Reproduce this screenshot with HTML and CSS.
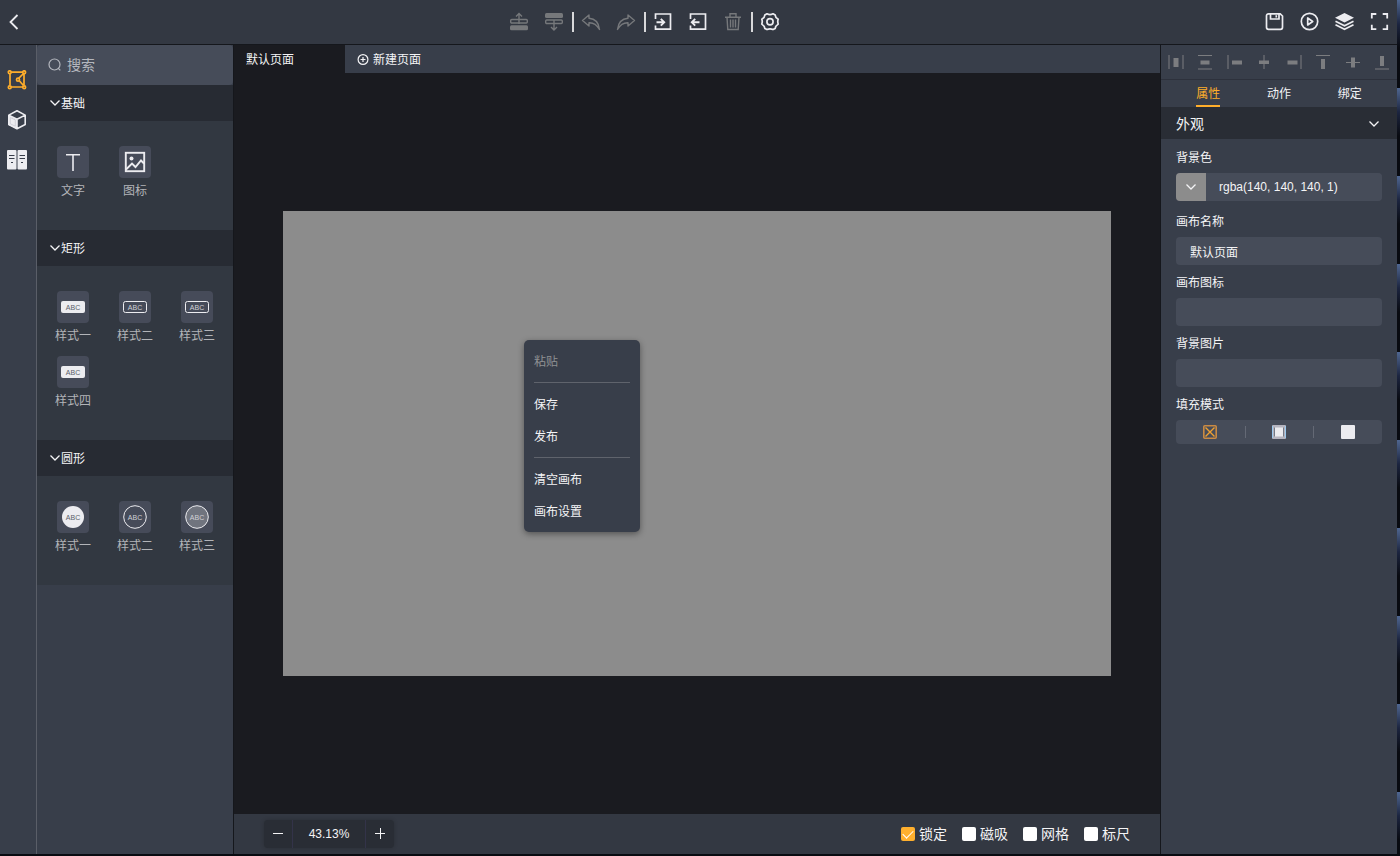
FILE: index.html
```html
<!DOCTYPE html>
<html lang="zh-CN">
<head>
<meta charset="utf-8">
<title>默认页面</title>
<link rel="stylesheet" href="styles.css">
</head>
<body>
<svg class="defs" aria-hidden="true">
  <symbol id="chev" viewBox="0 0 12 12"><path d="M1.500 3.500 6 8l4.500-4.500" fill="none" stroke="currentColor" stroke-width="1.300"/></symbol>
  <symbol id="abc-fill" viewBox="0 0 32 32"><rect x="4" y="10" width="24" height="12" rx="2" fill="#ececf0"/></symbol>
  <symbol id="abc-line" viewBox="0 0 32 32"><rect x="4.500" y="10.500" width="23" height="11" rx="2" fill="none" stroke="#ececf0"/></symbol>
</svg>
<div class="app">
  <header class="topbar">
    <button class="icon-btn" aria-label="返回"><svg viewBox="0 0 20 20"><path d="M13.500 3 6.500 10l7 7" fill="none" stroke="currentColor" stroke-width="1.800"/></svg></button>
    <div class="tools">
      <div class="tool-group">
        <button class="icon-btn off" aria-label="上移" disabled><svg viewBox="0 0 20 20"><g fill="none" stroke="currentColor" stroke-width="1.400"><path d="M10 12V2M7 4.500l3-3 3 3"/><rect x="1.700" y="7.500" width="16.600" height="3.500" rx="1"/></g><rect x="1" y="13.200" width="18" height="5" rx="1.500" fill="currentColor"/></svg></button>
        <button class="icon-btn off" aria-label="下移" disabled><svg viewBox="0 0 20 20"><g fill="none" stroke="currentColor" stroke-width="1.400"><path d="M10 8v9.500M7 15l3 3 3-3"/><rect x="1.700" y="8" width="16.600" height="3.500" rx="1"/></g><rect x="1" y="1" width="18" height="5" rx="1.500" fill="currentColor"/></svg></button>
      </div>
      <span class="bar"></span>
      <div class="tool-group">
        <button class="icon-btn off" aria-label="撤销" disabled><svg viewBox="0 0 20 20"><path d="M8 3 1.500 8.500 8 14v-3.300c4.500-.2 7.800 2 10.500 6.800C17.800 10.700 14 6.800 8 6.300Z" fill="none" stroke="currentColor" stroke-width="1.400" stroke-linejoin="round"/></svg></button>
        <button class="icon-btn off" aria-label="重做" disabled><svg viewBox="0 0 20 20"><path d="m12 3 6.500 5.500L12 14v-3.300c-4.500-.2-7.800 2-10.500 6.800C2.200 10.700 6 6.800 12 6.300Z" fill="none" stroke="currentColor" stroke-width="1.400" stroke-linejoin="round"/></svg></button>
      </div>
      <span class="bar"></span>
      <div class="tool-group">
        <button class="icon-btn" aria-label="导入"><svg viewBox="0 0 20 20"><g fill="none" stroke="currentColor" stroke-width="1.700"><path d="M2.500 7V2h15v15.200h-15v-3.700"/><path d="M3.500 10.300h7.500M7.800 6.900l3.400 3.400-3.400 3.400" stroke-width="1.900"/></g></svg></button>
        <button class="icon-btn" aria-label="导出"><svg viewBox="0 0 20 20"><g fill="none" stroke="currentColor" stroke-width="1.700"><path d="M2.500 7V2h15v15.200h-15v-3.700"/><path d="M11.500 10.300H4M7.200 6.900l-3.400 3.400 3.400 3.400" stroke-width="1.900"/></g></svg></button>
        <button class="icon-btn off" aria-label="删除" disabled><svg viewBox="0 0 20 20"><g fill="none" stroke="currentColor" stroke-width="1.400"><path d="M2 5.200h16M7 5V1.800h6V5M4 5.200l.8 12.300h10.400L16 5.200"/><path d="M7.500 7.500v8M10 7.500v8M12.500 7.500v8" stroke-width="1.400"/></g></svg></button>
      </div>
      <span class="bar"></span>
      <button class="icon-btn" aria-label="设置"><svg viewBox="0 0 20 20"><g fill="none" stroke="currentColor" stroke-width="1.700" stroke-linejoin="round"><path d="M7 1.800Q10 3.400 13 1.800L15.200 3.100Q15.300 5.600 18.200 7.300Q17.300 9.500 18.200 12.100Q15.300 13.900 15.200 16.400L13 17.600Q10 16 7 17.600L4.800 16.400Q4.700 13.900 1.800 12.100Q2.700 9.500 1.800 7.300Q4.700 5.600 4.800 3.100Z"/><circle cx="10" cy="9.700" r="3.100"/></g></svg></button>
    </div>
    <div class="tool-group">
      <button class="icon-btn" aria-label="保存"><svg viewBox="0 0 20 20"><g fill="none" stroke="currentColor" stroke-width="1.700"><path d="M3.500 1.800h11.700L17.500 4v11.300a2 2 0 0 1-2 2h-12a2 2 0 0 1-2-2V3.800a2 2 0 0 1 2-2Z"/><path d="M5.500 2v5h8.500V2M11.300 3.300v2.200"/></g></svg></button>
      <button class="icon-btn" aria-label="预览"><svg viewBox="0 0 20 20"><g fill="none" stroke="currentColor" stroke-width="1.700" stroke-linejoin="round"><circle cx="9.500" cy="9.500" r="8.200"/><path d="M7.700 6v7l5-3.500Z"/></g></svg></button>
      <button class="icon-btn" aria-label="图层"><svg viewBox="0 0 20 20"><path d="m9.500 1 9.500 4.800-9.500 4.800L0 5.800Z" fill="currentColor"/><path d="m.5 9.200 9 4.500 9-4.500M.5 12.700l9 4.500 9-4.500" fill="none" stroke="currentColor" stroke-width="1.700"/></svg></button>
      <button class="icon-btn" aria-label="全屏"><svg viewBox="0 0 20 20"><path d="M1.800 6.500V2h4.500M12.700 2h4.500v4.500M17.200 12.700v4.500h-4.500M6.300 17.200H1.800v-4.500" fill="none" stroke="currentColor" stroke-width="1.800"/></svg></button>
    </div>
  </header>

  <nav class="rail">
    <button class="icon-btn active" aria-label="组件"><svg viewBox="0 0 20 20"><g fill="none" stroke="currentColor" stroke-width="1.700"><path d="M4 2.200h12M4 17h12M3 4v11.500M17 4v11.500M16.500 3.500l-5 5M16.500 15.500l-4-4.500"/><circle cx="2.700" cy="2.200" r="1.400"/><circle cx="17.200" cy="2.200" r="1.400"/><circle cx="2.700" cy="17.200" r="1.400"/><circle cx="17.200" cy="17.200" r="1.400"/><circle cx="11" cy="9.700" r="1.500"/></g></svg></button>
    <button class="icon-btn" aria-label="模型"><svg viewBox="0 0 20 20"><path d="m1.500 5.500 8.500 4V19l-8.500-4Z" fill="currentColor"/><path d="m10 .8 8.200 4.300v9.400L10 18.800l-8.200-4.300V5.100ZM1.800 5.100 10 9.300l8.200-4.200M10 9.300v9.500" fill="none" stroke="currentColor" stroke-width="1.600" stroke-linejoin="round"/><path d="m3.300 7.500 5 2.400v6.300l-5-2.400Z" fill="none" stroke="#c9c9d2" stroke-width=".8"/></svg></button>
    <button class="icon-btn" aria-label="图库"><svg viewBox="0 0 20 20"><rect x="0" y="0" width="9.500" height="19.500" rx="1" fill="currentColor"/><rect x="10.500" y="0" width="9.500" height="19.500" rx="1" fill="currentColor"/><path d="M2 5.500h5.500M2 8.500h5.500M12.500 5.500H18M12.500 8.500H18M4 12.500h2M14 12.500h2" stroke="#373d49" stroke-width="1.200"/></svg></button>
  </nav>

  <aside class="library">
    <label class="search"><svg viewBox="0 0 14 14"><circle cx="6.500" cy="6.500" r="5.500" fill="none" stroke="currentColor" stroke-width="1.200"/><path d="m10.300 10.300 2 2" stroke="currentColor" stroke-width="1.200"/></svg><input type="text" placeholder="搜索" aria-label="搜索"></label>
    <section>
      <button class="group-head"><svg><use href="#chev"/></svg>基础</button>
      <div class="grid">
        <button class="item"><span class="tile"><svg viewBox="0 0 32 32"><path d="M9 8.700h14M16 8.700V25" stroke="#ececf0" stroke-width="1.600"/></svg></span>文字</button>
        <button class="item"><span class="tile"><svg viewBox="0 0 32 32"><g fill="none" stroke="#ececf0" stroke-width="1.900"><rect x="6.800" y="6.800" width="18.400" height="18.400"/><path d="M7 23.500l6-6 3.500 3.500 5.500-6.500 3 3"/></g><circle cx="12.500" cy="12.500" r="2" fill="#ececf0"/></svg></span>图标</button>
      </div>
    </section>
    <section>
      <button class="group-head"><svg><use href="#chev"/></svg>矩形</button>
      <div class="grid">
        <button class="item"><span class="tile dark"><svg viewBox="0 0 32 32"><use href="#abc-fill"/><text x="16" y="18.500">ABC</text></svg></span>样式一</button>
        <button class="item"><span class="tile"><svg viewBox="0 0 32 32"><use href="#abc-line"/><text x="16" y="18.500">ABC</text></svg></span>样式二</button>
        <button class="item"><span class="tile"><svg viewBox="0 0 32 32"><use href="#abc-line"/><text x="16" y="18.500">ABC</text></svg></span>样式三</button>
        <button class="item"><span class="tile dark"><svg viewBox="0 0 32 32"><use href="#abc-fill"/><text x="16" y="18.500">ABC</text></svg></span>样式四</button>
      </div>
    </section>
    <section>
      <button class="group-head"><svg><use href="#chev"/></svg>圆形</button>
      <div class="grid">
        <button class="item"><span class="tile dark"><svg viewBox="0 0 32 32"><circle cx="16" cy="16" r="11" fill="#ececf0"/><text x="16" y="18.500">ABC</text></svg></span>样式一</button>
        <button class="item"><span class="tile"><svg viewBox="0 0 32 32"><circle cx="16" cy="16" r="11.300" fill="none" stroke="#ececf0"/><text x="16" y="18.500">ABC</text></svg></span>样式二</button>
        <button class="item"><span class="tile"><svg viewBox="0 0 32 32"><circle cx="16" cy="16" r="11.300" fill="#70747e" stroke="#ececf0"/><text x="16" y="18.500">ABC</text></svg></span>样式三</button>
      </div>
    </section>
  </aside>

  <main class="stage">
    <div class="pages">
      <button class="page-tab current">默认页面</button>
      <button class="page-tab"><svg viewBox="0 0 12 12"><g fill="none" stroke="currentColor" stroke-width="1.200"><circle cx="6" cy="5.500" r="4.900"/><path d="M3.500 5.500h5M6 3v5"/></g></svg>新建页面</button>
    </div>
    <div class="workspace">
      <div class="sheet"></div>
      <div class="menu" role="menu">
        <button role="menuitem" disabled>粘贴</button>
        <hr>
        <button role="menuitem">保存</button>
        <button role="menuitem">发布</button>
        <hr>
        <button role="menuitem">清空画布</button>
        <button role="menuitem">画布设置</button>
      </div>
    </div>
    <footer class="status">
      <div class="zoom">
        <button aria-label="缩小"><svg viewBox="0 0 12 12"><path d="M1 5.500h10" stroke="currentColor"/></svg></button>
        <output>43.13%</output>
        <button aria-label="放大"><svg viewBox="0 0 12 12"><path d="M1 5.500h10M6.500 0v11" stroke="currentColor"/></svg></button>
      </div>
      <div class="checks">
        <label><input type="checkbox" checked>锁定</label>
        <label><input type="checkbox">磁吸</label>
        <label><input type="checkbox">网格</label>
        <label><input type="checkbox">标尺</label>
      </div>
    </footer>
  </main>

  <aside class="props">
    <div class="aligns">
      <button aria-label="水平分布"><svg viewBox="0 0 16 16"><path d="M1 1v14M15 1v14" stroke="currentColor"/><path d="M5.500 4h5v9h-5z" fill="currentColor"/></svg></button>
      <button aria-label="垂直分布"><svg viewBox="0 0 16 16"><path d="M1 1.500h14M1 15h14" stroke="currentColor"/><path d="M3.500 6.500h9v4h-9z" fill="currentColor"/></svg></button>
      <button aria-label="左对齐"><svg viewBox="0 0 16 16"><path d="M1 1v14" stroke="currentColor"/><path d="M5 6.500h10v4H5z" fill="currentColor"/></svg></button>
      <button aria-label="水平居中"><svg viewBox="0 0 16 16"><path d="M8 1v14" stroke="currentColor"/><path d="M3 6.500h10v3.500h-10z" fill="currentColor"/></svg></button>
      <button aria-label="右对齐"><svg viewBox="0 0 16 16"><path d="M15 1v14" stroke="currentColor"/><path d="M1.500 6.500h10v4h-10z" fill="currentColor"/></svg></button>
      <button aria-label="顶对齐"><svg viewBox="0 0 16 16"><path d="M1 1.500h14" stroke="currentColor"/><path d="M6 5h4v10H6z" fill="currentColor"/></svg></button>
      <button aria-label="垂直居中"><svg viewBox="0 0 16 16"><path d="M1 8.500h14" stroke="currentColor"/><path d="M6 3.500h4v10H6z" fill="currentColor"/></svg></button>
      <button aria-label="底对齐"><svg viewBox="0 0 16 16"><path d="M1 15h14" stroke="currentColor"/><path d="M6 2h4v10H6z" fill="currentColor"/></svg></button>
    </div>
    <div class="prop-tabs" role="tablist">
      <button role="tab" aria-selected="true">属性</button>
      <button role="tab">动作</button>
      <button role="tab">绑定</button>
    </div>
    <button class="prop-head">外观<svg><use href="#chev"/></svg></button>
    <form class="form">
      <div class="field color-field">
        <label for="bg">背景色</label>
        <div class="color"><button type="button" class="swatch" aria-label="选择颜色"><svg><use href="#chev"/></svg></button><input id="bg" type="text" value="rgba(140, 140, 140, 1)"></div>
      </div>
      <div class="field"><label for="name">画布名称</label><input id="name" type="text" value="默认页面"></div>
      <div class="field"><label for="icon">画布图标</label><input id="icon" type="text"></div>
      <div class="field"><label for="image">背景图片</label><input id="image" type="text"></div>
      <fieldset class="field">
        <legend>填充模式</legend>
        <div class="modes">
          <label class="picked"><input type="radio" name="fill" aria-label="无填充" checked><svg viewBox="0 0 14 14"><g fill="none" stroke="currentColor"><rect x=".8" y=".8" width="12.400" height="12.400" rx="1" stroke="#c98a44" stroke-width="1.600"/><path d="m2.500 2.500 9 9M11.500 2.500l-9 9" stroke-width="1.400"/></g></svg></label>
          <label><input type="radio" name="fill" aria-label="适应"><svg viewBox="0 0 14 14"><rect width="14" height="14" rx="1" fill="#b5b4bf"/><path d="M.5 1v12M13.500 1v12" stroke="#9bcaf0"/><rect x="2.500" y="2.500" width="9" height="9" fill="#ececf0"/><path d="M2.500 2.500v9M11.500 2.500v9" stroke="#737884"/></svg></label>
          <label><input type="radio" name="fill" aria-label="铺满"><svg viewBox="0 0 14 14"><rect width="14" height="14" rx="1" fill="#ececf0"/></svg></label>
        </div>
      </fieldset>
    </form>
  </aside>
</div>
</body>
</html>
```
FILE: styles.css
```css
* { box-sizing: border-box; }
body {
  margin: 0;
  padding: 0 3px 2px 0;
  height: 100vh;
  background: repeating-linear-gradient(#4f6690, #1c2540 24px, #090b11 48px, #090b11 88px);
  color: #f4f4f6;
  font: 12px/22px "Liberation Sans", "Noto Sans CJK SC", sans-serif;
}
button, input { font: inherit; color: inherit; border: 0; padding: 0; margin: 0; background: none; }
.defs { position: absolute; width: 0; height: 0; }
svg { display: block; flex: none; }

.app {
  height: 100%;
  display: grid;
  grid-template: 45px minmax(0, 1fr) / 37px 197px minmax(0, 1fr) 237px;
  background: #383e4a;
}

.topbar {
  grid-column: 1 / -1;
  display: flex;
  align-items: center;
  justify-content: space-between;
  padding: 0 7px 0 4px;
  background: #333842;
  border-bottom: 1px solid #15171c;
}
.tools, .tool-group { display: flex; align-items: center; }
.tool-group { gap: 15px; }
.bar { width: 2px; height: 20px; margin: 0 7px 0 8px; background: #d8d8da; }
.icon-btn { width: 20px; height: 20px; color: #ececf0; }
.icon-btn svg { width: 20px; height: 20px; }
.off { color: #76787b; }
.active { color: #ffae2b; }

.rail {
  display: flex;
  flex-direction: column;
  align-items: center;
  gap: 20px;
  padding: 25px 2px 0 0;
  border-right: 1px solid #5a5e68;
}

.library { border-right: 1px solid #15171c; overflow: hidden; }
.search {
  display: flex;
  align-items: center;
  gap: 5px;
  height: 40px;
  padding: 0 11px;
  background: #464c59;
  border-radius: 4px;
  color: #b4b7be;
}
.search svg { width: 14px; height: 14px; }
.search input { flex: 1; min-width: 0; font-size: 14px; outline: 0; }
.search input::placeholder { color: #b4b7be; }
.group-head {
  display: flex;
  align-items: center;
  width: 100%;
  height: 36px;
  padding: 2px 12px 0;
  background: #272b33;
}
.group-head svg { width: 12px; height: 12px; margin-bottom: 2px; }
.grid {
  display: grid;
  grid-template-columns: repeat(3, 1fr);
  row-gap: 9px;
  padding: 25px 5px 28px;
  background: #323841;
}
.item { display: flex; flex-direction: column; align-items: center; gap: 2px; color: #b2b4b8; }
.tile { width: 32px; height: 32px; border-radius: 4px; background: #464b59; }
.tile svg { width: 32px; height: 32px; }
.tile text { font-size: 7px; text-anchor: middle; fill: #d0d1d5; }
.tile.dark text { fill: #5a5e69; }

.stage { display: flex; flex-direction: column; min-width: 0; background: #1a1b20; }
.pages { display: flex; height: 28px; background: #383e4a; }
.page-tab { display: flex; align-items: center; gap: 4px; padding: 2px 12px 0; }
.page-tab svg { width: 12px; height: 12px; }
.page-tab.current { width: 111px; background: #1a1b20; }
.workspace {
  position: relative;
  flex: 1;
  min-height: 0;
  display: flex;
  align-items: center;
  padding: 0 49px;
}
.sheet { width: 100%; aspect-ratio: 16 / 9; background: #8c8c8c; }
.menu {
  position: absolute;
  left: 290px;
  top: 267px;
  width: 116px;
  padding: 5px 10px;
  display: flex;
  flex-direction: column;
  border-radius: 5px;
  background: #383e4a;
  box-shadow: 0 2px 6px rgba(0, 0, 0, .4);
}
.menu button { height: 32px; padding-top: 2px; text-align: left; }
.menu button:disabled { color: #8f9194; }
.menu hr { width: 100%; height: 1px; margin: 5px 0; border: 0; background: #5f636c; }

.status {
  display: flex;
  align-items: center;
  justify-content: space-between;
  height: 40px;
  padding: 0 30px;
  background: #333842;
}
.zoom {
  display: flex;
  width: 130px;
  height: 28px;
  border-radius: 4px;
  background: #292d35;
  box-shadow: 0 0 4px rgba(0, 0, 0, .2);
}
.zoom button { display: flex; align-items: center; justify-content: center; width: 28px; }
.zoom svg { width: 12px; height: 12px; }
.zoom output {
  flex: 1;
  text-align: center;
  line-height: 28px;
  border: solid #333349;
  border-width: 0 1px;
}
.checks { display: flex; gap: 15px; font-size: 14px; }
.checks label { display: flex; align-items: center; gap: 4px; }
.checks input {
  appearance: none;
  display: grid;
  place-items: center;
  width: 14px;
  height: 14px;
  border-radius: 2px;
  background: #fff;
}
.checks input:checked { background: #ffb02e; }
.checks input:checked::after {
  content: "";
  width: 9px;
  height: 5px;
  margin-bottom: 3px;
  border: solid #fff;
  border-width: 0 0 1px 1px;
  transform: rotate(-45deg);
}

.props { border-left: 1px solid #15171c; }
.aligns {
  display: flex;
  align-items: center;
  justify-content: space-around;
  height: 35px;
  border-bottom: 1px solid #2d313c;
  color: #7c7d80;
}
.aligns svg { width: 16px; height: 16px; }
.prop-tabs { display: grid; grid-template-columns: repeat(3, 1fr); justify-items: center; height: 27px; padding: 0 12px; }
.prop-tabs button { padding: 3px 0 0; border-bottom: 2px solid transparent; }
.prop-tabs [aria-selected="true"] { color: #ffae2b; border-color: #ffae2b; }
.prop-head {
  display: flex;
  align-items: center;
  justify-content: space-between;
  width: 100%;
  height: 32px;
  padding: 2px 17px 0 15px;
  background: #292d35;
  font-size: 14px;
}
.prop-head svg, .swatch svg { width: 12px; height: 12px; }
.form { display: flex; flex-direction: column; gap: 7px; padding: 8px 15px; }
.field { display: flex; flex-direction: column; gap: 4px; margin: 0; padding: 0; border: 0; min-width: 0; }
.field legend { padding: 0; margin-bottom: 4px; }
.color-field { margin-bottom: 3px; }
.field input[type="text"] { width: 100%; height: 28px; padding: 0 14px; border-radius: 4px; background: #464c59; outline: 0; }
.color { display: flex; border-radius: 4px; background: #464c59; overflow: hidden; }
.color .swatch { display: grid; place-items: center; flex: none; width: 30px; background: #8c8c8c; }
.color input[type="text"] { padding: 0 13px; }
.modes { display: grid; grid-template-columns: repeat(3, 1fr); height: 24px; border-radius: 4px; background: #464c59; }
.modes label { position: relative; display: grid; place-items: center; }
.modes label + label::before { content: ""; position: absolute; left: 0; top: 6px; width: 1px; height: 12px; background: #646975; }
.modes input { position: absolute; inset: 0; appearance: none; }
.modes svg { width: 14px; height: 14px; }
.modes .picked { color: #f0a030; }
```
